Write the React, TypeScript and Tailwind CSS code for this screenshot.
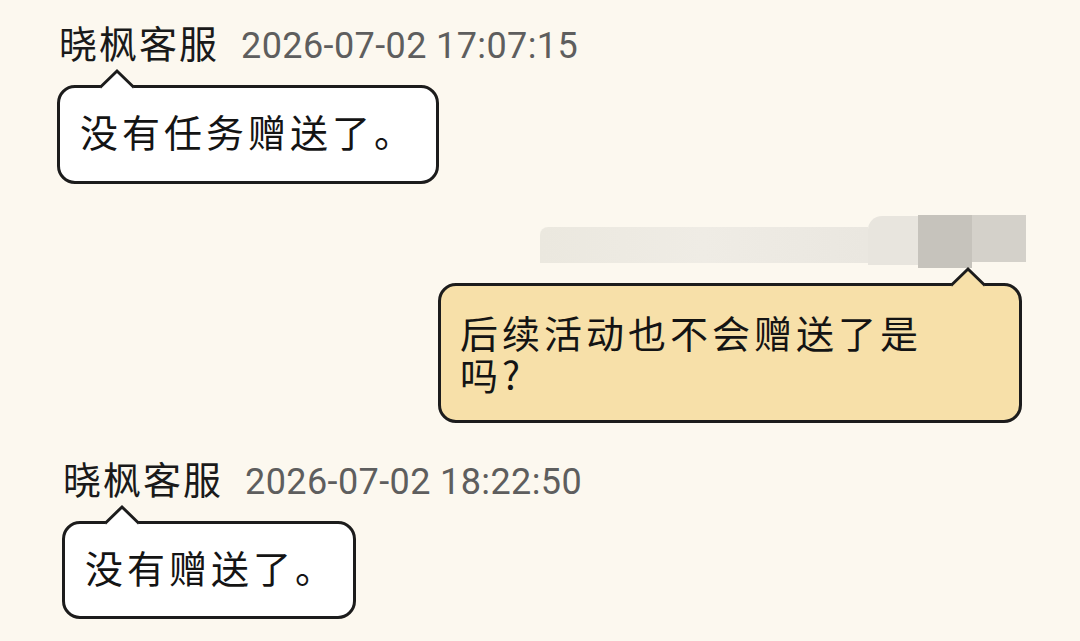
import React from 'react';

const CJK = { fontFamily: '"Noto Sans CJK SC", "Noto Sans", sans-serif' };
const NUM = { fontFamily: 'Roboto, "Liberation Sans", sans-serif' };

function Tail({ fill, left }: { fill: string; left: number }) {
  // little pointer sitting on the top border of a bubble
  return (
    <svg
      className="absolute"
      style={{ left, top: -20 }}
      width="34"
      height="23"
      viewBox="0 0 34 23"
    >
      <polygon points="0,19.5 17,3 34,19.5 34,23 0,23" fill={fill} />
      <path d="M0 19.5 L17 3 L34 19.5" fill="none" stroke="#1c1c1c" strokeWidth="3" strokeLinejoin="miter" />
    </svg>
  );
}

function Header({ time }: { time: string }) {
  return (
    <div className="flex items-baseline h-[44px] leading-[44px]">
      <span className="text-[38px] tracking-[2px] text-[#1a1a1a]" style={CJK}>晓枫客服</span>
      <span className="ml-[22px] text-[36px] tracking-[0.4px] text-[#5e5e5e]" style={NUM}>{time}</span>
    </div>
  );
}

export default function App() {
  return (
    <div className="w-full h-[641px] overflow-hidden bg-[#fcf8ef]">
      {/* first reply */}
      <div className="pt-[20px] pl-[59px]">
        <Header time="2026-07-02 17:07:15" />
      </div>
      <div className="pl-[57px] mt-[21px] flex">
        <div className="relative bg-white border-[3px] border-[#1c1c1c] rounded-[18px] pl-[20px] pr-[20px] pt-[21px] pb-[28px]">
          <Tail fill="#ffffff" left={40} />
          <div className="text-[38px] leading-[44px] tracking-[4px] text-[#141414]" style={CJK}>没有任务赠送了。</div>
        </div>
      </div>

      {/* blurred nickname */}
      <div className="flex justify-end pr-[54px] mt-[31px]">
        <div className="flex items-start blur-[0.6px]">
          <div className="w-[328px] h-[36px] mt-[12px] rounded-tl-[8px] bg-linear-to-r from-[#ebe8df] via-[#efece5] to-[#eae7e0]" />
          <div className="w-[50px] h-[49px] mt-[1px] bg-[#e8e5de] rounded-tl-[14px]" />
          <div className="w-[54px] h-[53px] bg-[#c6c3bc]" />
          <div className="w-[54px] h-[47px] bg-[#d4d1ca]" />
        </div>
      </div>

      {/* my question */}
      <div className="flex justify-end pr-[58px] mt-[15px]">
        <div className="relative w-[584px] bg-[#f7e0a9] border-[3px] border-[#1c1c1c] rounded-[18px] pl-[19px] pr-[20px] pt-[25px] pb-[25px]">
          <Tail fill="#f7e0a9" left={510} />
          <div className="text-[38px] leading-[42px] tracking-[4px] text-[#141414]" style={CJK}>
            <div>后续活动也不会赠送了是</div>
            <div>吗?</div>
          </div>
        </div>
      </div>

      {/* second reply */}
      <div className="pl-[63px] mt-[33px]">
        <Header time="2026-07-02 18:22:50" />
      </div>
      <div className="pl-[62px] mt-[21px] flex">
        <div className="relative bg-white border-[3px] border-[#1c1c1c] rounded-[18px] pl-[20px] pr-[16px] pt-[21px] pb-[27px]">
          <Tail fill="#ffffff" left={40} />
          <div className="text-[38px] leading-[44px] tracking-[4px] text-[#141414]" style={CJK}>没有赠送了。</div>
        </div>
      </div>
    </div>
  );
}
